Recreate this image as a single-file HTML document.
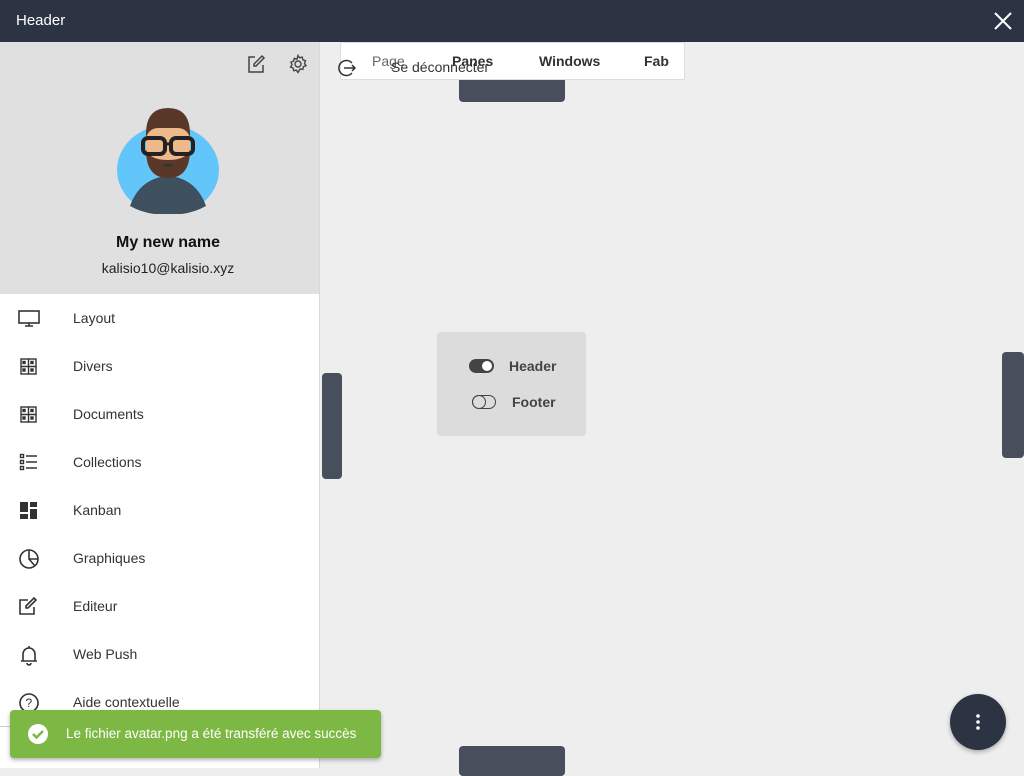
<!DOCTYPE html>
<html><head><meta charset="utf-8"><style>
*{box-sizing:border-box;margin:0;padding:0}
body{width:1024px;height:768px;overflow:hidden;background:#eeeeee;font-family:"Liberation Sans",Roboto,sans-serif;position:relative;color:#333}
.hdr{position:absolute;left:0;top:0;width:1024px;height:42px;background:#2c3342;color:#fff;font-size:15px;padding:12px 16px}
.side{position:absolute;left:0;top:42px;width:320px;height:726px;background:#fff;border-right:1px solid #d8d8d8}
.prof{height:252px;background:#e0e0e0;position:relative}
.item{position:absolute;left:0;height:48px;width:318px;font-size:14px;color:#333}
.item span{position:absolute;left:73px;top:16px}
.item svg{position:absolute;left:18px;top:14px}
.tab{position:absolute;font-size:14px;color:#333;font-weight:bold;top:53px}
.bar{position:absolute;background:#474f5c;border-radius:4px}
</style></head><body>
<div class="hdr">Header</div>
<svg style="position:absolute;left:993px;top:11px" width="20" height="20"><path d="M2 2L18 18M18 2L2 18" stroke="#fff" stroke-width="2"/></svg>
<div class="side">
<div class="prof">
<svg style="position:absolute;left:246px;top:12px" width="20" height="20" fill="none" stroke="#444" stroke-width="1.5"><path d="M9 3H3v15h14v-7"/><path d="M16 2l2 2-8 8H8v-2z"/></svg>
<svg style="position:absolute;left:288px;top:12px" width="20" height="20" fill="none" stroke="#444" stroke-width="1.4"><circle cx="10" cy="10" r="3"/><path d="M10 1.5l1.5 2.3 2.7-.7.7 2.7 2.6 1-1 2.6 1.5 2.3-2.6 1-.6 2.7-2.7-.5L10 18.5l-1.6-2.3-2.7.5-.6-2.7-2.6-1 1.5-2.3-1-2.6 2.6-1 .7-2.7 2.7.7z"/></svg>
<svg style="position:absolute;left:116px;top:64px" width="104" height="108" viewBox="0 0 104 108">
<ellipse cx="52" cy="64" rx="51" ry="45" fill="#62c6fb"/>
<path d="M14 100q10-28 38-30q28 2 38 30q-16 9-38 9t-38-9z" fill="#3e4f5e"/>
<path d="M30 28q0-26 22-26q22 0 22 26v16h-44z" fill="#5a3828"/>
<rect x="30" y="22" width="44" height="40" rx="12" fill="#edb98a"/>
<path d="M30 44q0 28 22 28q22 0 22-28q-4 10-22 10q-18 0-22-10z" fill="#5a3828"/>
<rect x="27" y="32" width="22" height="16" rx="5" fill="none" stroke="#222" stroke-width="4"/><rect x="55" y="32" width="22" height="16" rx="5" fill="none" stroke="#222" stroke-width="4"/>
<path d="M49 38h6" stroke="#222" stroke-width="3"/>
<path d="M46 58q6 6 12 0z" fill="#333"/>
</svg>
<div style="position:absolute;top:192px;width:336px;text-align:center;font-weight:bold;font-size:16px;color:#111">My new name</div>
<div style="position:absolute;top:218px;width:336px;text-align:center;font-size:14px;color:#222">kalisio10@kalisio.xyz</div>
</div>
<div class="item" style="top:252px"><svg width="24" height="20" fill="none" stroke="#333" stroke-width="1.6"><rect x="1" y="3" width="20" height="12"/><path d="M11 15v3M7 18h8"/></svg><span>Layout</span></div>
<div class="item" style="top:300px"><svg width="20" height="20" fill="none" stroke="#333" stroke-width="1.4"><rect x="3" y="3" width="15" height="15"/><path d="M10.5 3v15M3 10.5h15"/><rect x="5" y="5.5" width="2" height="2" fill="#333"/><rect x="13" y="5.5" width="2" height="2" fill="#333"/><rect x="5" y="13" width="2" height="2" fill="#333"/><rect x="13" y="13" width="2" height="2" fill="#333"/></svg><span>Divers</span></div>
<div class="item" style="top:348px"><svg width="20" height="20" fill="none" stroke="#333" stroke-width="1.4"><rect x="3" y="3" width="15" height="15"/><path d="M10.5 3v15M3 10.5h15"/><rect x="5" y="5.5" width="2" height="2" fill="#333"/><rect x="13" y="5.5" width="2" height="2" fill="#333"/><rect x="5" y="13" width="2" height="2" fill="#333"/><rect x="13" y="13" width="2" height="2" fill="#333"/></svg><span>Documents</span></div>
<div class="item" style="top:396px"><svg width="20" height="20" fill="none" stroke="#333" stroke-width="1.4"><rect x="2.5" y="2.5" width="3" height="3"/><rect x="2.5" y="8.5" width="3" height="3"/><rect x="2.5" y="14.5" width="3" height="3"/><path d="M8 4h11M8 10h11M8 16h11"/></svg><span>Collections</span></div>
<div class="item" style="top:444px"><svg width="20" height="20" fill="#333"><rect x="2" y="2" width="8" height="10"/><rect x="12" y="2" width="7" height="5"/><rect x="2" y="14" width="8" height="5"/><rect x="12" y="9" width="7" height="10"/></svg><span>Kanban</span></div>
<div class="item" style="top:492px"><svg width="22" height="22" fill="none" stroke="#333" stroke-width="1.6"><circle cx="11" cy="11" r="9"/><path d="M11 2v9h9M11 11l6 7"/></svg><span>Graphiques</span></div>
<div class="item" style="top:540px"><svg width="20" height="20" fill="none" stroke="#333" stroke-width="1.6"><path d="M10 4H2v14h14v-7"/><path d="M16 2l2 2-8 8H8v-2z"/></svg><span>Editeur</span></div>
<div class="item" style="top:588px"><svg width="22" height="22" fill="none" stroke="#333" stroke-width="1.6"><path d="M5 17V10a6 6 0 0112 0v7zM3 17h16M11 2v2M9 19a2 2 0 004 0"/></svg><span>Web Push</span></div>
<div class="item" style="top:636px"><svg width="22" height="22" fill="none" stroke="#333" stroke-width="1.6"><circle cx="11" cy="11" r="9"/><text x="7.5" y="15" font-size="12" fill="#333" stroke="none" font-family="Liberation Sans">?</text></svg><span>Aide contextuelle</span></div>
<div style="position:absolute;left:0;top:684px;width:318px;border-top:1px solid #ccc"></div>
</div>
<div class="bar" style="left:459px;top:70px;width:106px;height:32px"></div>
<div style="position:absolute;left:340px;top:42px;width:345px;height:38px;background:#fff;border:1px solid #ddd;border-radius:2px"></div>
<div class="tab" style="left:372px;font-weight:normal;color:#666">Page</div>
<div class="tab" style="left:452px">Panes</div>
<div class="tab" style="left:539px">Windows</div>
<div class="tab" style="left:644px">Fab</div>
<svg style="position:absolute;left:337px;top:58px" width="20" height="20" fill="none" stroke="#333" stroke-width="1.5"><path d="M15 5a7.5 7.5 0 100 10"/><path d="M7 10h11M15 7l3 3-3 3"/></svg>
<div style="position:absolute;left:391px;top:59px;font-size:14px;color:#333">Se déconnecter</div>
<div class="bar" style="left:322px;top:373px;width:20px;height:106px"></div>
<div class="bar" style="left:1002px;top:352px;width:22px;height:106px"></div>
<div class="bar" style="left:459px;top:746px;width:106px;height:30px"></div>
<div style="position:absolute;left:437px;top:332px;width:149px;height:104px;background:#dcdcdc;border-radius:4px"></div>
<div style="position:absolute;left:469px;top:359px;width:25px;height:14px;border-radius:7px;background:#444"></div>
<div style="position:absolute;left:482px;top:361px;width:10px;height:10px;border-radius:5px;background:#fff"></div>
<div style="position:absolute;left:509px;top:358px;font-size:14px;font-weight:bold;color:#444">Header</div>
<div style="position:absolute;left:472px;top:395px;width:24px;height:14px;border-radius:7px;border:1.5px solid #444"></div>
<div style="position:absolute;left:472px;top:395px;width:14px;height:14px;border-radius:7px;border:1.5px solid #444"></div>
<div style="position:absolute;left:512px;top:394px;font-size:14px;font-weight:bold;color:#444">Footer</div>
<div style="position:absolute;left:10px;top:710px;width:371px;height:48px;background:#7cb843;border-radius:4px;box-shadow:0 2px 4px rgba(0,0,0,.3)"></div>
<svg style="position:absolute;left:27px;top:723px" width="22" height="22"><circle cx="11" cy="11" r="10" fill="#fff"/><path d="M6 11l3.5 3.5L16 8" stroke="#7cb843" stroke-width="2.5" fill="none"/></svg>
<div style="position:absolute;left:66px;top:726px;font-size:13.5px;color:#fff">Le fichier avatar.png a été transféré avec succès</div>
<div style="position:absolute;left:950px;top:694px;width:56px;height:56px;border-radius:28px;background:#2c3342;box-shadow:0 2px 5px rgba(0,0,0,.3)"></div>
<svg style="position:absolute;left:975px;top:713px" width="6" height="18" fill="#fff"><circle cx="3" cy="3" r="1.8"/><circle cx="3" cy="9" r="1.8"/><circle cx="3" cy="15" r="1.8"/></svg>
</body></html>
